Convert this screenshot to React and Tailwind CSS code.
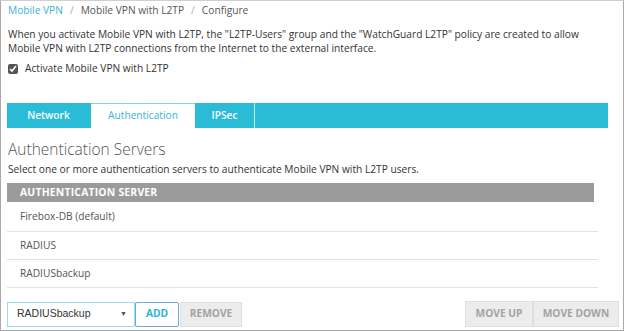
import React from "react";

const rows = [
  { name: "Firebox-DB (default)", h: "h-[30px]" },
  { name: "RADIUS", h: "h-[28px]" },
  { name: "RADIUSbackup", h: "h-[28px]" },
];

const App = () => {
  return (
    <div
      className="w-[624px] h-[331px] bg-white border border-[#a9a9a9] border-t-[#d0d0d0] relative overflow-hidden text-[#333]"
      style={{ fontFamily: '"Open Sans", sans-serif' }}
    >
      <div className="pl-[6px] pr-[14px]">
        {/* breadcrumb */}
        <div className="h-[20px] flex items-center gap-[7px] text-[10.2px] pl-[1px]">
          <span className="text-[#3ab5d4]">Mobile VPN</span>
          <span className="text-[#aaa]">/</span>
          <span className="text-[#555]">Mobile VPN with L2TP</span>
          <span className="text-[#aaa]">/</span>
          <span className="text-[#555]">Configure</span>
        </div>

        <p className="mt-[6px] text-[10.2px] leading-[14px] pl-[1px] pr-[20px]">
          When you activate Mobile VPN with L2TP, the "L2TP-Users" group and the "WatchGuard L2TP" policy are created to allow Mobile VPN with L2TP connections from the Internet to the external interface.
        </p>

        <label className="mt-[7px] h-[14px] flex items-center gap-[7px] text-[10.2px] pl-[1px]">
          <input type="checkbox" defaultChecked className="w-[10px] h-[10px] m-0 accent-[#555]" />
          <span>Activate Mobile VPN with L2TP</span>
        </label>

        {/* tabs */}
        <div className="mt-[27px] w-[601px] h-[25px] bg-[#2abbd7] flex text-[10.2px]">
          <div className="w-[83px] flex items-center justify-center text-white font-semibold">Network</div>
          <div className="w-[104px] flex items-center justify-center bg-white text-[#3ab5d4] border-t border-[#7fd3e6] ml-[1px]">
            Authentication
          </div>
          <div className="w-[60px] flex items-center justify-center text-white font-semibold border-r border-[#bde9f3]">IPSec</div>
        </div>

        <h2 className="mt-[11px] text-[15.5px] font-light text-[#555] leading-[20px] pl-[1px]">Authentication Servers</h2>
        <p className="mt-[3px] text-[10.2px] leading-[14px] pl-[1px]">
          Select one or more authentication servers to authenticate Mobile VPN with L2TP users.
        </p>

        {/* table */}
        <div className="mt-[7px] w-[587px] h-[19px] bg-[#9b9b9b] flex items-center pl-[13px] text-white text-[10.4px] font-bold tracking-[0.2px]">
          AUTHENTICATION SERVER
        </div>
        <div className="w-[591px]">
          {rows.map((r) => (
            <div
              key={r.name}
              className={`${r.h} border-b border-[#e2e2e2] flex items-center pl-[13px] text-[10.2px] text-[#555]`}
            >
              {r.name}
            </div>
          ))}
        </div>

        {/* bottom controls */}
        <div className="mt-[13px] flex items-center justify-between w-[612px]">
          <div className="flex items-center">
            <div
              className="w-[128px] h-[25px] border border-[#9bdcec] flex items-center justify-between pl-[9px] pr-[7px] text-[10.5px] text-[#333]"
              style={{ fontFamily: '"Liberation Sans", sans-serif' }}
            >
              <span>RADIUSbackup</span>
              <span className="text-[7px] text-[#555]">▼</span>
            </div>
            <button className="w-[44px] h-[25px] border border-[#6aa8e6] rounded-[2px] text-[#2bb3d6] font-bold text-[10.2px]">
              ADD
            </button>
            <button className="ml-[1px] w-[62px] h-[25px] bg-[#ececec] border border-[#e0e0e0] text-[#a3a3a3] font-bold text-[10.2px]">
              REMOVE
            </button>
          </div>
          <div className="flex items-center">
            <button className="w-[68px] h-[26px] bg-[#ececec] border border-[#e0e0e0] text-[#a3a3a3] font-bold text-[10.2px]">
              MOVE UP
            </button>
            <button className="w-[86px] h-[26px] bg-[#ececec] border border-[#e0e0e0] border-l-[#dcdcdc] text-[#a3a3a3] font-bold text-[10.2px]">
              MOVE DOWN
            </button>
          </div>
        </div>
      </div>
    </div>
  );
};

export default App;
